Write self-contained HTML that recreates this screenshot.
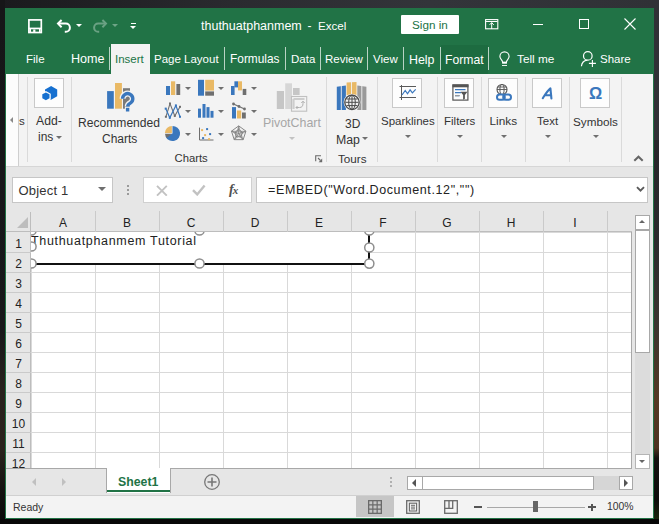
<!DOCTYPE html>
<html><head><meta charset="utf-8">
<style>
*{margin:0;padding:0;box-sizing:border-box}
html,body{width:659px;height:524px;overflow:hidden;background:#1b1c1f;font-family:"Liberation Sans",sans-serif}
.a{position:absolute}
.t{position:absolute;white-space:pre;line-height:1}
.tab{position:absolute;white-space:pre;line-height:1;color:#fff;font-size:11.5px;top:54px}
.sep{position:absolute;width:1px;background:#b9d3c4;top:47px;height:23px}
.rsep{position:absolute;width:1px;background:#dadada;top:77px;height:85px}
.rb{position:absolute;background:#fdfdfd;border:1px solid #c9c9c9}
.lbl{position:absolute;white-space:pre;line-height:1;font-size:11.5px;color:#333}
.arr{position:absolute;width:0;height:0;border-left:3px solid transparent;border-right:3px solid transparent;border-top:3px solid #6f6f6f}
.hdr{position:absolute;font-size:12px;color:#222;line-height:1;white-space:pre;text-align:center}
.rn{position:absolute;font-size:12px;color:#222;line-height:1;white-space:pre;width:25px;text-align:center;left:6px}
</style></head><body>
<!-- desktop bg -->
<div class="a" style="left:0;top:0;width:659px;height:524px;background:linear-gradient(90deg,#1a1a1d 0%,#2a2a2f 35%,#33343a 65%,#303136 100%)"></div>
<div class="a" style="left:0;top:0;width:5px;height:524px;background:linear-gradient(180deg,#161618 0px,#18181a 330px,#29231d 390px,#2a231c 450px,#141210 490px,#080808 524px)"></div>
<div class="a" style="left:654px;top:140px;width:5px;height:384px;background:linear-gradient(180deg,#27272b 0px,#2a2a2c 100px,#3a3430 180px,#553a24 260px,#4f3522 308px,#151210 318px,#0c0c0a 360px,#1f2a0e 384px)"></div>
<div class="a" style="left:0;top:519px;width:659px;height:5px;background:#070707"></div>

<!-- window -->
<div class="a" style="left:5px;top:8px;width:649px;height:511px;background:#217346"></div>

<!-- QAT -->
<svg class="a" style="left:27px;top:18px" width="16" height="16" viewBox="0 0 16 16">
 <rect x="1.9" y="1.9" width="12.4" height="12.6" fill="none" stroke="#fff" stroke-width="1.7"/>
 <rect x="1.5" y="9.6" width="13" height="1.7" fill="#fff"/>
 <rect x="2.5" y="11" width="1.5" height="3" fill="#fff"/>
 <rect x="12" y="11" width="1.5" height="3" fill="#fff"/>
 <rect x="6.2" y="11.5" width="2.2" height="2.5" fill="#fff"/>
</svg>
<svg class="a" style="left:56px;top:19px" width="18" height="15" viewBox="0 0 18 15">
 <path d="M2 4.6H9.8A4.1 4.1 0 0 1 9.8 12.8H8.8" fill="none" stroke="#fff" stroke-width="2"/>
 <path d="M5.6 1L2 4.6l3.6 3.6" fill="none" stroke="#fff" stroke-width="2"/>
</svg>
<div class="arr" style="left:76px;top:24px;border-top-color:#fff;border-left-width:3px;border-right-width:3px;border-top-width:3px"></div>
<svg class="a" style="left:90px;top:19px" width="18" height="15" viewBox="0 0 18 15" opacity="0.33">
 <path d="M16 4.6H8.2A4.1 4.1 0 0 0 8.2 12.8H9.2" fill="none" stroke="#fff" stroke-width="2"/>
 <path d="M12.4 1L16 4.6l-3.6 3.6" fill="none" stroke="#fff" stroke-width="2"/>
</svg>
<div class="arr" style="left:112px;top:24px;border-top-color:#6fa587"></div>
<div class="a" style="left:131px;top:23px;width:5px;height:1px;background:#fff"></div>
<div class="arr" style="left:130px;top:26px;border-top-color:#fff;border-left-width:3.5px;border-right-width:3.5px;border-top-width:3.5px"></div>

<!-- title -->
<div class="t" style="left:201px;top:20px;font-size:12.5px;color:#fff">thuthuatphanmem</div>
<div class="t" style="left:307.5px;top:20px;font-size:12px;color:#fff">-</div>
<div class="t" style="left:318px;top:20px;font-size:11.6px;color:#fff">Excel</div>
<div class="a" style="left:401px;top:15px;width:58px;height:19px;background:#fff;border-radius:1px"></div>
<div class="t" style="left:412px;top:19px;font-size:11.7px;color:#217346">Sign in</div>

<!-- window controls -->
<svg class="a" style="left:485px;top:19px" width="14" height="11" viewBox="0 0 14 11">
 <rect x="0.6" y="0.6" width="12.2" height="9.2" fill="none" stroke="#fff" stroke-width="1.1"/>
 <path d="M1 2.5H12.5" stroke="#fff" stroke-width="1"/>
 <path d="M6.7 3.6V10M4.6 5.8L6.7 3.7 8.8 5.8" fill="none" stroke="#fff" stroke-width="1"/>
</svg>
<div class="a" style="left:533px;top:24px;width:10px;height:1px;background:#fff"></div>
<div class="a" style="left:579px;top:19px;width:10px;height:10px;border:1px solid #fff"></div>
<svg class="a" style="left:624px;top:18px" width="12" height="12" viewBox="0 0 12 12">
 <path d="M0.5 0.5l11 11M11.5 0.5l-11 11" stroke="#fff" stroke-width="1.1"/>
</svg>

<!-- tabs row -->
<div class="tab" style="left:26px">File</div>
<div class="tab" style="left:71px;font-size:12.6px;top:53px">Home</div>
<div class="sep" style="left:109px"></div>
<div class="a" style="left:111px;top:44px;width:39px;height:30px;background:#f3f3f3"></div>
<div class="tab" style="left:115px;color:#217346">Insert</div>
<div class="tab" style="left:154px">Page Layout</div>
<div class="sep" style="left:224px"></div>
<div class="tab" style="left:230px;font-size:11.9px">Formulas</div>
<div class="sep" style="left:285px"></div>
<div class="tab" style="left:291px">Data</div>
<div class="sep" style="left:320px"></div>
<div class="tab" style="left:325px">Review</div>
<div class="sep" style="left:367px"></div>
<div class="tab" style="left:373px">View</div>
<div class="sep" style="left:403px"></div>
<div class="tab" style="left:409px;font-size:12.4px;top:53.5px">Help</div>
<div class="a" style="left:441px;top:45px;width:47px;height:29px;background:#1d6b40"></div>
<div class="sep" style="left:440px"></div>
<div class="tab" style="left:445px;font-size:12.2px;top:53.5px">Format</div>
<div class="sep" style="left:488px"></div>
<svg class="a" style="left:499px;top:51px" width="11" height="16" viewBox="0 0 11 16">
 <path d="M3.6 11.2C3.6 8.9 0.9 8.1 0.9 5.5a4.6 4.6 0 0 1 9.2 0C10.1 8.1 7.4 8.9 7.4 11.2z" fill="none" stroke="#fff" stroke-width="1.15"/>
 <rect x="3.1" y="10.8" width="4.8" height="1.9" fill="#fff"/>
 <rect x="3" y="14" width="5" height="0.9" fill="#fff"/>
</svg>
<div class="tab" style="left:517px;font-size:11.8px">Tell me</div>
<svg class="a" style="left:580px;top:50px" width="18" height="18" viewBox="0 0 18 18">
 <circle cx="7.8" cy="5.9" r="4.3" fill="none" stroke="#fff" stroke-width="1.2"/>
 <path d="M1.4 16.3C1.8 12.7 3.8 10.6 7.2 10.1" fill="none" stroke="#fff" stroke-width="1.2"/>
 <path d="M12.4 10v7M8.9 13.4h7" stroke="#fff" stroke-width="1.1"/>
</svg>
<div class="tab" style="left:600px">Share</div>

<!-- RIBBON -->
<div class="a" style="left:6px;top:74px;width:647px;height:93px;background:#f3f3f3;border-bottom:1px solid #d6d6d6"></div>
<!-- left scroll -->
<div class="a" style="left:6px;top:74px;width:13px;height:92px;background:#fcfcfc;border-right:1px solid #cfcfcf"></div>
<div class="a" style="left:10px;top:117px;width:0;height:0;border-top:3.5px solid transparent;border-bottom:3.5px solid transparent;border-right:3.5px solid #8a8a8a"></div>
<div class="lbl" style="left:19px;top:115.7px">s</div>
<div class="rsep" style="left:27px"></div>
<!-- Add-ins -->
<div class="rb" style="left:34px;top:78px;width:30px;height:30px"></div>
<svg class="a" style="left:40px;top:84px" width="20" height="18" viewBox="40 84 20 18">
 <path d="M51.10 86.00L57.20 89.45L57.20 96.35L51.10 99.80L45.00 96.35L45.00 89.45z" fill="#1670d0"/>
 <path d="M45.90 92.40L49.50 94.35L49.50 98.25L45.90 100.20L42.30 98.25L42.30 94.35z" fill="#fdfdfd" transform="translate(45.9 96.3) scale(1.35) translate(-45.9 -96.3)"/>
 <path d="M45.90 92.40L49.50 94.35L49.50 98.25L45.90 100.20L42.30 98.25L42.30 94.35z" fill="#1670d0"/>
</svg>
<div class="lbl" style="left:36px;top:115px;font-size:12.2px">Add-</div>
<div class="lbl" style="left:38px;top:131px;font-size:12px">ins</div>
<div class="arr" style="left:56px;top:136px"></div>
<div class="rsep" style="left:71px"></div>
<!-- Recommended charts -->
<svg class="a" style="left:106px;top:82px" width="30" height="31" viewBox="0 0 30 31">
 <rect x="1.1" y="9.1" width="6.7" height="17.6" fill="#3a77bd"/>
 <rect x="9" y="1" width="6.9" height="25.7" fill="#e9b965"/>
 <rect x="17" y="6.2" width="7" height="20.5" fill="#7a7a7a"/>
 <path d="M16.6 16.8A5.1 5.1 0 1 1 24.6 20.9C22.6 22.1 21.7 22.9 21.7 24.4" fill="none" stroke="#f3f3f3" stroke-width="6"/>
 <rect x="18.9" y="24.8" width="5.4" height="5.8" fill="#f3f3f3"/>
 <path d="M16.6 16.8A5.1 5.1 0 1 1 24.6 20.9C22.6 22.1 21.7 22.9 21.7 24.4" fill="none" stroke="#3a77bd" stroke-width="3.4"/>
 <rect x="19.9" y="25.8" width="3.4" height="3.7" fill="#3a77bd"/>
</svg>
<div class="lbl" style="left:78px;top:117px;font-size:12.1px">Recommended</div>
<div class="lbl" style="left:102px;top:133px;font-size:12px">Charts</div>
<!-- chart grid icons -->
<svg class="a" style="left:160px;top:76px" width="100" height="70" viewBox="0 0 100 70">
 <rect x="6.0" y="10.0" width="4.0" height="9.0" fill="#3a77bd"/>
 <rect x="11.0" y="5.3" width="4.2" height="13.7" fill="#e9b965"/>
 <rect x="16.4" y="8.0" width="3.8" height="11.0" fill="#6f6f6f"/>
 <rect x="38.0" y="3.8" width="6.0" height="15.9" fill="#3a77bd"/>
 <rect x="45.2" y="3.8" width="8.8" height="10.8" fill="#e9b965"/>
 <rect x="45.2" y="15.4" width="8.8" height="4.3" fill="#6f6f6f"/>
 <rect x="71.0" y="10.0" width="3.6" height="9.0" fill="#3a77bd"/>
 <rect x="74.4" y="5.3" width="3.6" height="6.1" fill="#3a77bd"/>
 <rect x="78.0" y="5.3" width="4.0" height="9.1" fill="#e9b965"/>
 <rect x="82.7" y="12.9" width="3.6" height="6.1" fill="#6f6f6f"/>
 <rect x="38.0" y="32.6" width="3.0" height="9.1" fill="#3a77bd"/>
 <rect x="42.5" y="28.0" width="3.0" height="13.7" fill="#3a77bd"/>
 <rect x="46.5" y="31.1" width="3.0" height="10.6" fill="#3a77bd"/>
 <rect x="50.5" y="34.9" width="3.0" height="6.8" fill="#3a77bd"/>
 <rect x="72.0" y="31.1" width="4.0" height="11.4" fill="#3a77bd"/>
 <rect x="77.0" y="34.5" width="4.2" height="8.0" fill="#e9b965"/>
 <rect x="82.0" y="36.5" width="3.8" height="6.0" fill="#6f6f6f"/>
 <path d="M73.5 28.0L79.0 30.5L84.5 33.0" fill="none" stroke="#6f6f6f" stroke-width="1.2"/><circle cx="73.5" cy="28" r="1.4" fill="#6f6f6f"/><circle cx="79" cy="30.5" r="1.4" fill="#6f6f6f"/><circle cx="84.5" cy="33" r="1.4" fill="#6f6f6f"/>
 <path d="M5.9 40.8L10.0 27.6L14.8 39.9L20.0 30.8" fill="none" stroke="#6f6f6f" stroke-width="1.1"/><rect x="4.9" y="39.8" width="2" height="2" fill="#6f6f6f"/><rect x="9.0" y="26.6" width="2" height="2" fill="#6f6f6f"/><rect x="13.8" y="38.9" width="2" height="2" fill="#6f6f6f"/><rect x="19.0" y="29.8" width="2" height="2" fill="#6f6f6f"/><path d="M5.7 32.6L9.8 41.8L15.9 29.5L20.0 40.8" fill="none" stroke="#3a77bd" stroke-width="1.2"/><rect x="4.7" y="31.6" width="2" height="2" fill="#3a77bd"/><rect x="8.8" y="40.8" width="2" height="2" fill="#3a77bd"/><rect x="14.9" y="28.5" width="2" height="2" fill="#3a77bd"/><rect x="19.0" y="39.8" width="2" height="2" fill="#3a77bd"/>
 <path d="M12.5 57.5V49.9A7.6 7.6 0 1 1 5.51 60.54z" fill="#3a77bd"/>
 <path d="M11.9 56.9V49.9A7.3 7.3 0 0 0 4.9 56.9z" fill="#e9b965"/>
 <path d="M11.9 57.7H5.0A7.6 7.6 0 0 0 6.80 62.06z" fill="#6f6f6f"/>
 <path d="M39.5 51.6V" fill="none"/>
 <path d="M39.5 51.599999999999994V64H53.5" fill="none" stroke="#6f6f6f" stroke-width="1"/><rect x="41.1" y="53.1" width="2.0" height="2.0" fill="#e9b965"/><rect x="46.1" y="52.1" width="2.0" height="2.0" fill="#3a77bd"/><rect x="44.1" y="58.1" width="2.0" height="2.0" fill="#e9b965"/><rect x="49.1" y="57.1" width="2.0" height="2.0" fill="#3a77bd"/><rect x="42.1" y="61.1" width="2.0" height="2.0" fill="#3a77bd"/><rect x="48.1" y="62.1" width="2.0" height="2.0" fill="#e9b965"/>
 <path d="M78.70 49.90L85.93 55.15L83.17 63.65L74.23 63.65L71.47 55.15z" fill="none" stroke="#7a7a7a" stroke-width="0.9"/>
 <path d="M78.70 53.50L82.50 56.26L81.05 60.74L76.35 60.74L74.90 56.26z" fill="none" stroke="#7a7a7a" stroke-width="0.9"/>
 <path d="M78.70 57.50L78.70 49.90M78.70 57.50L85.93 55.15M78.70 57.50L83.17 63.65M78.70 57.50L74.23 63.65M78.70 57.50L71.47 55.15" fill="none" stroke="#7a7a7a" stroke-width="0.9"/>
 <path d="M78.70 50.30L82.93 63.32L71.85 55.28L85.55 55.28L74.47 63.32z" fill="none" stroke="#8a8a8a" stroke-width="0.7"/>
</svg>
<div class="arr" style="left:185px;top:87px"></div><div class="arr" style="left:218px;top:87px"></div><div class="arr" style="left:251px;top:87px"></div>
<div class="arr" style="left:185px;top:110px"></div><div class="arr" style="left:218px;top:110px"></div><div class="arr" style="left:251px;top:110px"></div>
<div class="arr" style="left:185px;top:133px"></div><div class="arr" style="left:218px;top:133px"></div><div class="arr" style="left:251px;top:133px"></div>
<!-- PivotChart -->
<svg class="a" style="left:276px;top:82px" width="32" height="31" viewBox="0 0 32 31">
 <rect x="0.8" y="9" width="7.2" height="18" fill="#c6c6c6"/>
 <rect x="9.2" y="1.3" width="6.8" height="25.7" fill="#d6d6d6"/>
 <rect x="17" y="6" width="6.6" height="7" fill="#c6c6c6"/>
 <rect x="15.5" y="14.5" width="15.2" height="14.7" fill="#f3f3f3" stroke="#c0c0c0" stroke-width="1.1"/>
 <path d="M17.5 17h11M17.5 17v10" stroke="#cdcdcd" stroke-width="2.2"/>
 <path d="M20 25.5h3.5c2.5 0 3.5-1.5 3.5-4v-2M25.3 21l1.7-1.8 1.7 1.8M21.5 24l-1.5 1.5 1.5 1.5" fill="none" stroke="#b0b0b0" stroke-width="1"/>
</svg>
<div class="lbl" style="left:263px;top:117px;color:#a6a6a6;font-size:12.4px">PivotChart</div>
<div class="arr" style="left:289px;top:137px;border-top-color:#c2c2c2"></div>
<div class="lbl" style="left:174.5px;top:152.7px;font-size:11.3px">Charts</div>
<svg class="a" style="left:315px;top:155px" width="8" height="8" viewBox="0 0 8 8">
 <path d="M0.7 6.2V0.7H6" fill="none" stroke="#6a6a6a" stroke-width="1.1"/>
 <path d="M3 3l2.5 2.5" stroke="#6a6a6a" stroke-width="1.1"/>
 <path d="M7.2 3.6V7.2H3.6z" fill="#6a6a6a"/>
</svg>
<div class="rsep" style="left:326px"></div>
<!-- 3D Map -->
<svg class="a" style="left:336px;top:81px" width="31" height="30" viewBox="0 0 31 30">
 <path d="M0.8 5.8L9.9 4.5V29H0.8z" fill="#3a77bd"/>
 <path d="M10.6 1.6L20.5 0.9V14H10.6z" fill="#e9b965"/>
 <path d="M21.3 4.5L30.4 5.8V29H21.3z" fill="#9a9a9a"/>
 <path d="M5.3 5v24M15.5 1v13M25.8 5v24" stroke="#f3f3f3" stroke-width="0.9"/>
 <circle cx="16" cy="21.3" r="7.4" fill="#f3f3f3" stroke="#f3f3f3" stroke-width="2"/>
 <circle cx="16" cy="21.3" r="7.2" fill="#f3f3f3" stroke="#4a4a4a" stroke-width="1.3"/>
 <path d="M9.5 21.3h13M10.5 18h11M10.5 24.6h11M16 14.1v14.4" stroke="#4a4a4a" stroke-width="1"/>
 <ellipse cx="16" cy="21.3" rx="3.3" ry="7.2" fill="none" stroke="#4a4a4a" stroke-width="1"/>
</svg>
<div class="lbl" style="left:345px;top:117.7px;font-size:12px">3D</div>
<div class="lbl" style="left:336px;top:133.7px;font-size:12.3px">Map</div>
<div class="arr" style="left:362px;top:137px"></div>
<div class="lbl" style="left:338px;top:152.7px;font-size:11.7px">Tours</div>
<div class="rsep" style="left:377px"></div>
<!-- Sparklines -->
<div class="rb" style="left:392px;top:78px;width:30px;height:30px"></div>
<svg class="a" style="left:398px;top:84px" width="19" height="17" viewBox="0 0 19 17">
 <path d="M3.5 1v15M1.5 2.5h16.5M1.5 13.5h16.5" stroke="#5a5a5a" stroke-width="1"/>
 <path d="M4 11l3.2-4.5 2.3 3.3 2.6-4 2.3 3 3.3-3.5" fill="none" stroke="#3a77bd" stroke-width="1.2"/>
</svg>
<div class="lbl" style="left:381px;top:115.7px">Sparklines</div>
<div class="arr" style="left:405px;top:135px"></div>
<div class="rsep" style="left:437px"></div>
<!-- Filters -->
<div class="rb" style="left:444px;top:78px;width:30px;height:30px"></div>
<svg class="a" style="left:452px;top:84px" width="17" height="17" viewBox="0 0 17 17">
 <rect x="0.9" y="0.9" width="15" height="15.2" fill="#fdfdfd" stroke="#555" stroke-width="1.2"/>
 <rect x="0.5" y="0.5" width="16" height="2.8" fill="#555"/>
 <path d="M3 5.6h10.5M3 8.6h6M3 11.6h4.5" stroke="#3a77bd" stroke-width="1.3"/>
 <path d="M3 11.6h4.5" stroke="#9a9a9a" stroke-width="1.3"/>
 <path d="M8.5 7.8h7l-2.6 3.2v3.8l-1.8 1V11z" fill="#555"/>
</svg>
<div class="lbl" style="left:444px;top:115.7px">Filters</div>
<div class="arr" style="left:457px;top:135px"></div>
<div class="rsep" style="left:481px"></div>
<!-- Links -->
<div class="rb" style="left:488px;top:78px;width:30px;height:30px"></div>
<svg class="a" style="left:495px;top:83px" width="18" height="19" viewBox="0 0 18 19">
 <circle cx="7" cy="6.5" r="5" fill="none" stroke="#555" stroke-width="1.1"/>
 <ellipse cx="7" cy="6.5" rx="2.1" ry="5" fill="none" stroke="#555" stroke-width="1"/>
 <path d="M2 6.5h10M2.8 4h8.4" stroke="#555" stroke-width="0.9"/>
 <rect x="2" y="11.6" width="7.8" height="5.2" rx="2.6" fill="#fdfdfd" stroke="#3a77bd" stroke-width="2"/>
 <rect x="8.2" y="11.6" width="7.8" height="5.2" rx="2.6" fill="none" stroke="#3a77bd" stroke-width="2"/>
</svg>
<div class="lbl" style="left:489.5px;top:115.7px;font-size:11.8px">Links</div>
<div class="arr" style="left:501px;top:135px"></div>
<div class="rsep" style="left:525px"></div>
<!-- Text -->
<div class="rb" style="left:532px;top:78px;width:30px;height:30px"></div>
<svg class="a" style="left:541px;top:87px" width="13" height="13" viewBox="0 0 13 13">
 <path d="M1.8 11.2C3.5 8.5 6.5 3.5 9.4 1.3L10.4 11.4M4.6 8.2h5.6" fill="none" stroke="#3a77bd" stroke-width="2.1" stroke-linecap="round" stroke-linejoin="round"/>
</svg>
<div class="lbl" style="left:537px;top:115.7px">Text</div>
<div class="arr" style="left:545px;top:135px"></div>
<div class="rsep" style="left:569px"></div>
<!-- Symbols -->
<div class="rb" style="left:580px;top:78px;width:30px;height:30px"></div>
<div class="t" style="left:589px;top:85px;font-size:16.5px;color:#3a77bd;font-weight:bold">Ω</div>
<div class="lbl" style="left:573px;top:115.7px;font-size:11.7px">Symbols</div>
<div class="arr" style="left:593px;top:135px"></div>
<div class="rsep" style="left:621px"></div>
<svg class="a" style="left:633px;top:155px" width="11" height="7" viewBox="0 0 11 7">
 <path d="M1.3 5.8L5.5 1.7 9.7 5.8" fill="none" stroke="#666" stroke-width="2"/>
</svg>
<!-- FORMULA BAR AREA -->
<div class="a" style="left:6px;top:167px;width:647px;height:45px;background:#e6e6e6"></div>
<div class="a" style="left:12px;top:177px;width:101px;height:26px;background:#fff;border:1px solid #c6c6c6"></div>
<div class="t" style="left:18.5px;top:184px;font-size:13px;letter-spacing:0.2px;color:#333">Object 1</div>
<div class="a" style="left:98px;top:187px;width:0;height:0;border-left:4px solid transparent;border-right:4px solid transparent;border-top:4px solid #6f6f6f"></div>
<div class="a" style="left:127px;top:185px;width:2px;height:2px;background:#9a9a9a"></div>
<div class="a" style="left:127px;top:189px;width:2px;height:2px;background:#9a9a9a"></div>
<div class="a" style="left:127px;top:193px;width:2px;height:2px;background:#9a9a9a"></div>
<div class="a" style="left:143px;top:177px;width:109px;height:26px;background:#fff;border:1px solid #d0d0d0"></div>
<svg class="a" style="left:156px;top:185px" width="12" height="11" viewBox="0 0 12 11"><path d="M1 0.8l9.8 9.8M10.8 0.8L1 10.6" stroke="#c2c2c2" stroke-width="1.9"/></svg>
<svg class="a" style="left:192px;top:184px" width="14" height="12" viewBox="0 0 14 12"><path d="M1 6.2l4.2 4.2L12.6 1.4" fill="none" stroke="#c2c2c2" stroke-width="2.4"/></svg>
<div class="t" style="left:229px;top:183px;font-size:14px;color:#505050;font-family:'Liberation Serif',serif;font-style:italic;font-weight:bold">f<span style="font-size:11px;margin-left:-1px">x</span></div>
<div class="a" style="left:256px;top:177px;width:392px;height:26px;background:#fff;border:1px solid #c6c6c6"></div>
<div class="t" style="left:268px;top:184.3px;font-size:12.5px;letter-spacing:0.62px;color:#222">=EMBED("Word.Document.12","")</div>
<svg class="a" style="left:635.5px;top:186px" width="9" height="7" viewBox="0 0 9 7"><path d="M1 1.2l3.5 3.5L8 1.2" fill="none" stroke="#5a5a5a" stroke-width="1.9"/></svg>

<!-- HEADERS -->
<div class="a" style="left:31px;top:232px;width:601px;height:236px;background-color:#fff;
 background-image:linear-gradient(90deg,#d9d9d9 1px,transparent 1px),linear-gradient(180deg,#d9d9d9 1px,transparent 1px);
 background-size:64px 20px;background-position:0px 0px;border-right:1px solid #a8a8a8"></div>
<!-- embedded object -->
<div class="a" style="left:31px;top:229px;width:338px;height:35px;background:#fff"></div>
<div class="t" style="left:31px;top:235.4px;font-size:12.5px;letter-spacing:0.68px;color:#222">Thuthuatphanmem Tutorial</div>
<div class="a" style="left:31px;top:263.4px;width:338px;height:1.6px;background:#111"></div>
<div class="a" style="left:368.4px;top:230px;width:1.6px;height:35px;background:#111"></div>
<svg class="a" style="left:20px;top:220px" width="362" height="56" viewBox="0 0 362 56">
 <g fill="#fff" stroke="#8e8e8e" stroke-width="1.5">
  <circle cx="11.5" cy="26.5" r="4.6"/>
  <circle cx="11.5" cy="43.5" r="4.6"/>
  <circle cx="179.5" cy="43.5" r="4.6"/>
  <circle cx="349.3" cy="43.6" r="4.6"/>
  <circle cx="349.3" cy="27.5" r="4.6"/>
  <circle cx="349.3" cy="10.5" r="4.6"/>
  <circle cx="179.5" cy="10.5" r="4.6"/>
  <circle cx="11.5" cy="10.5" r="4.6"/>
 </g>
</svg>
<div class="a" style="left:6px;top:212px;width:626px;height:20px;background:#e6e6e6;border-bottom:1px solid #bdbdbd"></div>
<div class="a" style="left:6px;top:232px;width:25px;height:236px;background:#e6e6e6;border-right:1px solid #bdbdbd"></div>
<div class="a" style="left:6px;top:212px;width:25px;height:20px;border-right:1px solid #bdbdbd"></div>
<div class="a" style="left:17px;top:217px;width:0;height:0;border-left:11px solid transparent;border-bottom:11px solid #bdbdbd"></div>
<div class="a" style="left:95px;top:211px;width:1px;height:21px;background:#cacaca"></div>
<div class="hdr" style="left:31px;top:217px;width:64px">A</div>
<div class="a" style="left:159px;top:211px;width:1px;height:21px;background:#cacaca"></div>
<div class="hdr" style="left:95px;top:217px;width:64px">B</div>
<div class="a" style="left:223px;top:211px;width:1px;height:21px;background:#cacaca"></div>
<div class="hdr" style="left:159px;top:217px;width:64px">C</div>
<div class="a" style="left:287px;top:211px;width:1px;height:21px;background:#cacaca"></div>
<div class="hdr" style="left:223px;top:217px;width:64px">D</div>
<div class="a" style="left:351px;top:211px;width:1px;height:21px;background:#cacaca"></div>
<div class="hdr" style="left:287px;top:217px;width:64px">E</div>
<div class="a" style="left:415px;top:211px;width:1px;height:21px;background:#cacaca"></div>
<div class="hdr" style="left:351px;top:217px;width:64px">F</div>
<div class="a" style="left:479px;top:211px;width:1px;height:21px;background:#cacaca"></div>
<div class="hdr" style="left:415px;top:217px;width:64px">G</div>
<div class="a" style="left:543px;top:211px;width:1px;height:21px;background:#cacaca"></div>
<div class="hdr" style="left:479px;top:217px;width:64px">H</div>
<div class="a" style="left:607px;top:211px;width:1px;height:21px;background:#cacaca"></div>
<div class="hdr" style="left:543px;top:217px;width:64px">I</div>
<div class="hdr" style="left:607px;top:217px;width:64px">J</div>
<div class="a" style="left:6px;top:252px;width:25px;height:1px;background:#cacaca"></div>
<div class="rn" style="top:237.5px">1</div>
<div class="a" style="left:6px;top:272px;width:25px;height:1px;background:#cacaca"></div>
<div class="rn" style="top:257.5px">2</div>
<div class="a" style="left:6px;top:292px;width:25px;height:1px;background:#cacaca"></div>
<div class="rn" style="top:277.5px">3</div>
<div class="a" style="left:6px;top:312px;width:25px;height:1px;background:#cacaca"></div>
<div class="rn" style="top:297.5px">4</div>
<div class="a" style="left:6px;top:332px;width:25px;height:1px;background:#cacaca"></div>
<div class="rn" style="top:317.5px">5</div>
<div class="a" style="left:6px;top:352px;width:25px;height:1px;background:#cacaca"></div>
<div class="rn" style="top:337.5px">6</div>
<div class="a" style="left:6px;top:372px;width:25px;height:1px;background:#cacaca"></div>
<div class="rn" style="top:357.5px">7</div>
<div class="a" style="left:6px;top:392px;width:25px;height:1px;background:#cacaca"></div>
<div class="rn" style="top:377.5px">8</div>
<div class="a" style="left:6px;top:412px;width:25px;height:1px;background:#cacaca"></div>
<div class="rn" style="top:397.5px">9</div>
<div class="a" style="left:6px;top:432px;width:25px;height:1px;background:#cacaca"></div>
<div class="rn" style="top:417.5px">10</div>
<div class="a" style="left:6px;top:452px;width:25px;height:1px;background:#cacaca"></div>
<div class="rn" style="top:437.5px">11</div>
<div class="a" style="left:6px;top:472px;width:25px;height:1px;background:#cacaca"></div>
<div class="rn" style="top:457.5px">12</div>
<!-- V SCROLLBAR -->
<div class="a" style="left:632px;top:212px;width:21px;height:256px;background:#e6e6e6"></div>
<div class="a" style="left:635px;top:215px;width:15px;height:15px;background:#fff;border:1px solid #a8a8a8"></div>
<div class="a" style="left:639px;top:220px;width:0;height:0;border-left:3.8px solid transparent;border-right:3.8px solid transparent;border-bottom:3.8px solid #666"></div>
<div class="a" style="left:635px;top:231px;width:15px;height:224px;background:#dcdcdc"></div>
<div class="a" style="left:635px;top:230px;width:15px;height:123px;background:#fff;border:1px solid #a8a8a8"></div>


<!-- TAB BAR -->
<div class="a" style="left:6px;top:468px;width:647px;height:28px;background:#e6e6e6;border-top:1px solid #a8a8a8;border-bottom:1px solid #d0d0d0"></div>
<div class="a" style="left:635px;top:454px;width:15px;height:15px;background:#fff;border:1px solid #b4b4b4"></div>
<div class="a" style="left:639px;top:460px;width:0;height:0;border-left:3.8px solid transparent;border-right:3.8px solid transparent;border-top:3.8px solid #666"></div>
<div class="a" style="left:632px;top:468px;width:3px;height:1px;background:#e6e6e6"></div>
<div class="a" style="left:650px;top:468px;width:3px;height:1px;background:#e6e6e6"></div>
<div class="a" style="left:32px;top:478px;width:0;height:0;border-top:4px solid transparent;border-bottom:4px solid transparent;border-right:4px solid #c0c0c0"></div>
<div class="a" style="left:62px;top:478px;width:0;height:0;border-top:4px solid transparent;border-bottom:4px solid transparent;border-left:4px solid #c0c0c0"></div>
<div class="a" style="left:106px;top:468px;width:65px;height:25px;background:#fff;border-left:1px solid #a8a8a8;border-right:1px solid #a8a8a8"></div>
<div class="a" style="left:107px;top:490px;width:63px;height:2px;background:#217346"></div>
<div class="t" style="left:118px;top:476px;font-size:12.3px;font-weight:bold;color:#217346">Sheet1</div>
<svg class="a" style="left:203px;top:473px" width="18" height="18" viewBox="0 0 18 18">
 <circle cx="9" cy="9" r="7.3" fill="none" stroke="#777" stroke-width="1.3"/>
 <path d="M9 4.5v9M4.5 9h9" stroke="#777" stroke-width="1.6"/>
</svg>
<div class="a" style="left:390px;top:477px;width:2px;height:2px;background:#b0b0b0"></div>
<div class="a" style="left:390px;top:481px;width:2px;height:2px;background:#b0b0b0"></div>
<div class="a" style="left:390px;top:485px;width:2px;height:2px;background:#b0b0b0"></div>
<div class="a" style="left:407px;top:476px;width:226px;height:14px;background:#d6d6d6"></div>
<div class="a" style="left:407px;top:476px;width:16px;height:14px;background:#fff;border:1px solid #a8a8a8"></div>
<div class="a" style="left:412px;top:479px;width:0;height:0;border-top:4px solid transparent;border-bottom:4px solid transparent;border-right:4px solid #555"></div>
<div class="a" style="left:422px;top:476px;width:172px;height:14px;background:#fff;border:1px solid #a8a8a8"></div>
<div class="a" style="left:619px;top:476px;width:14px;height:14px;background:#fff;border:1px solid #a8a8a8"></div>
<div class="a" style="left:624px;top:479px;width:0;height:0;border-top:4px solid transparent;border-bottom:4px solid transparent;border-left:4px solid #555"></div>

<!-- STATUS BAR -->
<div class="a" style="left:6px;top:496px;width:647px;height:22px;background:#f3f3f3"></div>
<div class="t" style="left:13px;top:502px;font-size:10.5px;color:#333">Ready</div>
<div class="a" style="left:356px;top:496px;width:38px;height:21px;background:#c6c6c6"></div>
<svg class="a" style="left:367.5px;top:500px" width="14" height="14" viewBox="0 0 14 14">
 <rect x="0.65" y="0.65" width="12.7" height="12.7" fill="none" stroke="#6a6a6a" stroke-width="1.3"/>
 <path d="M4.85 0.5v13M9.15 0.5v13M0.5 4.85h13M0.5 9.15h13" stroke="#6a6a6a" stroke-width="1.2"/>
</svg>
<svg class="a" style="left:406px;top:500px" width="14" height="14" viewBox="0 0 14 14">
 <rect x="0.7" y="0.7" width="12.6" height="12.6" fill="none" stroke="#6a6a6a" stroke-width="1.3"/>
 <rect x="3.4" y="3.2" width="7.2" height="7.8" fill="none" stroke="#6a6a6a" stroke-width="1.1"/>
 <path d="M5 5.3h4M5 7.1h4M5 8.9h4" stroke="#6a6a6a" stroke-width="1"/>
</svg>
<svg class="a" style="left:443.5px;top:500px" width="14" height="14" viewBox="0 0 14 14">
 <rect x="0.7" y="0.7" width="12.6" height="12.6" fill="none" stroke="#6a6a6a" stroke-width="1.3"/>
 <path d="M0.7 8.3h8V0.7M5 0.7v7.6" fill="none" stroke="#6a6a6a" stroke-width="1.3"/>
</svg>
<div class="a" style="left:474px;top:506px;width:8px;height:2px;background:#555"></div>
<div class="a" style="left:487px;top:507px;width:98px;height:1px;background:#a8a8a8"></div>
<div class="a" style="left:533px;top:501px;width:5px;height:11px;background:#666"></div>
<div class="a" style="left:588px;top:506.3px;width:7.5px;height:1.7px;background:#555"></div>
<div class="a" style="left:590.9px;top:503.5px;width:1.7px;height:7.3px;background:#555"></div>
<div class="t" style="left:607px;top:502px;font-size:10.4px;color:#333">100%</div>
</body></html>
